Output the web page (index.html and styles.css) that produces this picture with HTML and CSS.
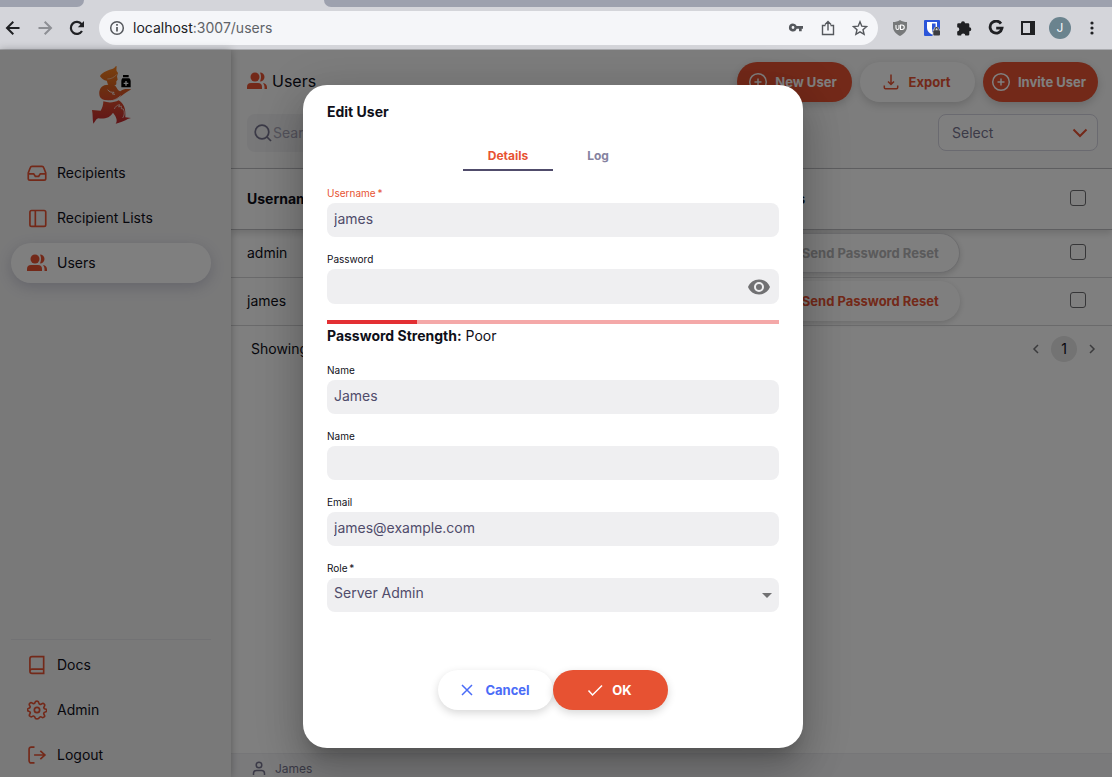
FILE: index.html
```html
<!DOCTYPE html>
<html lang="en">
<head>
<meta charset="utf-8">
<title>Users</title>
<link rel="stylesheet" href="styles.css">
</head>
<body>
<header class="chrome">
  <div class="tabstrip"><span class="tab-left"></span><span class="tab-active"></span><span class="tab-right"></span></div>
  <div class="toolbar">
    <div class="nav-buttons">
      <button class="tool" aria-label="Back"><svg width="16" height="16" viewBox="0 0 16 16" fill="none" stroke="#1f2023" stroke-width="2"><path d="M14.500 8H2.500M8.300 1.800 2 8l6.300 6.200"/></svg></button>
      <button class="tool" aria-label="Forward"><svg width="16" height="16" viewBox="0 0 16 16" fill="none" stroke="#8d8f94" stroke-width="2"><path d="M1.500 8h12M7.700 1.800 14 8l-6.300 6.200"/></svg></button>
      <button class="tool" aria-label="Reload"><svg width="16" height="16" viewBox="0 0 16 16"><path d="M13 11A6 6 0 1 1 12.600 4.200" fill="none" stroke="#1f2023" stroke-width="2.200"/><path d="M15 1v6.200H8.800z" fill="#1f2023"/></svg></button>
    </div>
    <div class="omnibox">
      <svg width="16" height="16" viewBox="0 0 16 16" fill="none" stroke="#55585d" stroke-width="1.500"><circle cx="8" cy="8" r="6.300"/><path d="M8 7v4.500M8 4v1.700" stroke-width="1.700"/></svg>
      <span class="url">localhost<span class="url-path">:3007/users</span></span>
      <div class="omni-actions">
        <svg width="16" height="16" viewBox="0 0 16 16" fill="#55585d"><path fill-rule="evenodd" d="M5 3.500a4 4 0 1 0 3.700 5.300H11v2.400h2.700V8.800H15V6H8.700A4 4 0 0 0 5 3.500zm0 2.600a1.400 1.400 0 1 1 0 2.800 1.400 1.400 0 0 1 0-2.800z"/></svg>
        <svg width="16" height="16" viewBox="0 0 16 16" fill="none" stroke="#55585d" stroke-width="1.400"><path d="M5.500 5.500h-3v9h11v-9h-3M8 10.500V2M5 4.500l3-3 3 3"/></svg>
        <svg width="16" height="16" viewBox="0 0 16 16" fill="none" stroke="#55585d" stroke-width="1.400"><path d="m8 1.800 1.800 4.400 4.800.4-3.600 3.100 1.100 4.700L8 11.900l-4.100 2.500L5 9.700 1.400 6.600l4.800-.4z"/></svg>
      </div>
    </div>
    <div class="extensions">
      <svg width="16" height="16" viewBox="0 0 16 16"><path d="M8 0c2 1.500 4.500 2 7 2v5c0 4-3 7-7 9-4-2-7-5-7-9V2c2.500 0 5-.5 7-2z" fill="#77797a"/><path d="M4 5v3q0 1.500 1.500 1.500T7 8V5M8.500 5v4.500h1.500a2.200 2.200 0 0 0 0-4.500z" fill="none" stroke="#fff" stroke-width="1.100"/></svg>
      <svg width="16" height="16" viewBox="0 0 16 16"><rect width="16" height="16" rx="1" fill="#2b55d9"/><path d="M3 2h10v6c0 3-2 5-5 6.500C5 13 3 11 3 8z" fill="#fff"/><path d="M8 3.500h3.600V8c0 2-1.300 3.500-3.600 4.500z" fill="#2b55d9"/><path d="M8.500 9.500h1.300a2.700 2.700 0 0 1 5.400 0h.8V16H8.500z" fill="#d4d5da"/><rect x="9.300" y="10.300" width="6.700" height="5.200" rx="1" fill="#3c3d40"/><path d="M11 10.500V9.300a1.600 1.600 0 0 1 3.200 0v1.200" fill="none" stroke="#3c3d40" stroke-width="1.200"/></svg>
      <svg width="16" height="16" viewBox="0 0 16 16" fill="#1f2023"><path d="M2.500 3.300H5a2 2 0 1 1 4 0h3a1.300 1.300 0 0 1 1.300 1.300v2.600a2 2 0 1 1 0 4v3.200A1.300 1.300 0 0 1 12 15.500H9.300a2.100 2.100 0 0 0-4.200 0H2.500a1.300 1.300 0 0 1-1.300-1.300v-2.800a2.100 2.100 0 0 0 0-4.200V4.600a1.300 1.300 0 0 1 1.300-1.300z"/></svg>
      <svg width="16" height="16" viewBox="0 0 16 16" fill="none" stroke="#1f2023" stroke-width="2.800"><path d="M13 3.600A6 6 0 1 0 14 8.200H8.200"/></svg>
      <svg width="16" height="16" viewBox="0 0 16 16" fill="#1f2023"><path fill-rule="evenodd" d="M1 1h14v14H1zm2 2v10h7V3z"/></svg>
      <span class="avatar">J</span>
      <svg width="16" height="16" viewBox="0 0 16 16" fill="#1f2023"><circle cx="8" cy="3" r="1.600"/><circle cx="8" cy="8" r="1.600"/><circle cx="8" cy="13" r="1.600"/></svg>
    </div>
  </div>
</header>

<div class="app">
  <nav class="sidebar" aria-label="Main">
    <svg class="logo" width="40" height="60" viewBox="33 33 120 180" role="img" aria-label="Logo">
      <defs><linearGradient id="flame" x1="0" y1="0" x2="0" y2="1"><stop offset="0" stop-color="#f58220"/><stop offset="1" stop-color="#d9641f"/></linearGradient>
      <linearGradient id="mid" x1="0" y1="0" x2="0" y2="1"><stop offset="0" stop-color="#d9641f"/><stop offset="1" stop-color="#d94a2b"/></linearGradient>
      <linearGradient id="ember" x1="0" y1="0" x2="0" y2="1"><stop offset="0" stop-color="#d94a2b"/><stop offset="1" stop-color="#bf2a30"/></linearGradient></defs>
      <path fill="url(#flame)" d="M60 64C64 54 80 47 94 43c8-3 12-6 15-12 2 7-1 12 1 17l4 6-3 10 2 10-4 5v9c-5 5-16 6-24 2-3-5-3-10-5-13-9-1-14-5-20-13z"/>
      <path fill="none" stroke="#f4f4f5" stroke-width="1.500" d="M82 72c12 0 20-5 28-13"/>
      <path fill="url(#mid)" d="M78 90c-18 2-24 22-18 36 6 10 28 14 46 8 12-4 26-20 48-31-12-2-25-2-33 6-8-1-10-12-17-18-8-4-17-3-26-1z"/>
      <path fill="none" stroke="#f4f4f5" stroke-width="2.500" d="M83 104c5 8 12 8 19 8l-5 5 8 1M70 136c20 5 38 0 52-14"/>
      <path fill="url(#ember)" d="M70 139c16 5 32 4 46-3 15 9 22 25 20 51l17 2c-14 3-24 13-46 17 7-10 1-22-8-33-8 14-24 20-44 17-8 2-9 10-15 16-3-14-1-26-4-41l26 2c5-7 8-18 8-28z"/>
      <path fill="none" stroke="#f4f4f5" stroke-width="2" d="M103 162c3-7 8-12 16-13l-3 7 8-3v8l6 1c5 10 3 20-2 27"/>
      <path fill="#000" d="M129 60h17v7h-17zM127 70h21q4 3 4 8v19h-28V78q0-5 3-8z"/>
      <path stroke="#f4f4f5" stroke-width="4" d="M131 85h14M138 78v14"/>
    </svg>
    <div class="menu">
      <a class="item" href="#recipients"><svg class="ic" viewBox="0 0 24 24"><path d="M22 13h-6l-2 3h-4l-2-3H2M6 4h12q1.500 0 2 1.500L22.500 12v6.500a2 2 0 0 1-2 2h-17a2 2 0 0 1-2-2V12L4 5.500Q4.500 4 6 4z"/></svg>Recipients</a>
      <a class="item" href="#lists"><svg class="ic" viewBox="0 0 24 24"><rect x="3.500" y="3" width="19" height="19" rx="2"/><path d="M10 3v19"/></svg>Recipient Lists</a>
      <a class="item active" href="#users" aria-current="page"><svg class="people" viewBox="0 0 20 20"><circle cx="8" cy="6" r="4.500"/><path d="M0 18v-2q0-4 4-4h7q4 0 4 4v2zM13 1.500a4.500 4.500 0 0 1 0 9q2-4.500 0-9zM16 12q4 .5 4 4.500V18h-2.500v-2q0-2-1.500-4z"/></svg>Users</a>
    </div>
    <div class="menu menu-bottom">
      <a class="item" href="#docs"><svg class="ic" viewBox="0 0 24 24"><path d="M20 17V2H6a2.500 2.500 0 0 0-2.500 2.500v15A2.500 2.500 0 0 0 6 22h14v-5H6a2.500 2.500 0 0 0-2.500 2.500"/></svg>Docs</a>
      <a class="item" href="#admin"><svg class="ic" viewBox="0 0 24 24"><circle cx="12" cy="12" r="3.200"/><path stroke-linejoin="round" d="M12 1.300q2 0 2.200 2.200.2 1.400 1.600 1.700 1 .2 1.800-.5 1.700-1.200 3 .1t.1 3q-.9 1-.3 2 .4.900 1.400 1 1.900.2 1.900 1.700t-1.900 1.900q-1.200.2-1.600 1.200-.4 1 .4 2 1.200 1.600-.1 2.800t-2.900.2q-1-.8-2-.3-.9.4-1.100 1.400Q14.200 22.700 12 22.700t-2.500-1.900q-.2-1-1.100-1.400-1-.5-2 .3-1.600 1-2.900-.2t-.1-2.800q.8-1 .4-2-.4-1-1.600-1.200Q.5 13.100.5 11.800t1.700-1.900q1-.1 1.400-1 .6-1-.3-2-1.200-1.700.1-3t3-.1q.8.700 1.800.5 1.400-.3 1.600-1.700Q10 1.300 12 1.300z"/></svg>Admin</a>
      <a class="item" href="#logout"><svg class="ic" viewBox="0 0 24 24"><path d="M9 2.500H5A2.500 2.500 0 0 0 2.500 5v14A2.500 2.500 0 0 0 5 21.500h4M8.500 12H21M16 7l5.500 5-5.500 5"/></svg>Logout</a>
    </div>
  </nav>

  <main class="main">
    <div class="page-head">
      <div class="head-row">
        <h1 class="page-title"><svg class="people" viewBox="0 0 20 20"><circle cx="8" cy="6" r="4.500"/><path d="M0 18v-2q0-4 4-4h7q4 0 4 4v2zM13 1.500a4.500 4.500 0 0 1 0 9q2-4.500 0-9zM16 12q4 .5 4 4.500V18h-2.500v-2q0-2-1.500-4z"/></svg>Users</h1>
        <div class="actions">
          <button class="btn primary"><svg class="bic" viewBox="0 0 20 20"><circle cx="10" cy="10" r="8.300"/><path d="M6.500 10h7M10 6.500v7"/></svg>New User</button>
          <button class="btn export"><svg class="bic" viewBox="0 0 20 20"><path d="M10 2.500v10M7 9.500l3 3 3-3M3.300 13.500v2a1.200 1.200 0 0 0 1.200 1.200h11a1.200 1.200 0 0 0 1.200-1.200v-2"/></svg>Export</button>
          <button class="btn primary"><svg class="bic" viewBox="0 0 20 20"><circle cx="10" cy="10" r="8.300"/><path d="M6.500 10h7M10 6.500v7"/></svg>Invite User</button>
        </div>
      </div>
      <div class="head-row">
        <label class="search"><svg width="18" height="18" viewBox="0 0 18 18" fill="none" stroke="#77748f" stroke-width="1.700"><circle cx="8" cy="8" r="6.800"/><path d="m13 13 4 4"/></svg><input type="search" placeholder="Search" aria-label="Search"></label>
        <div class="select-wrap"><select class="select" aria-label="Action"><option>Select</option></select><svg class="chev" width="16" height="10" viewBox="0 0 16 10"><path d="m1.500 1.500 6.500 6.500 6.500-6.500" fill="none" stroke="#e75232" stroke-width="2"/></svg></div>
      </div>
    </div>

    <table class="users">
      <colgroup><col class="c-name"><col><col class="c-check"></colgroup>
      <thead><tr><th>Username</th><th class="act">Actions</th><th class="chk"><input type="checkbox" aria-label="Select all"></th></tr></thead>
      <tbody>
        <tr><td>admin</td><td class="act"><button class="reset" disabled>Send Password Reset</button></td><td class="chk"><input type="checkbox" aria-label="Select admin"></td></tr>
        <tr><td>james</td><td class="act"><button class="reset">Send Password Reset</button></td><td class="chk"><input type="checkbox" aria-label="Select james"></td></tr>
      </tbody>
    </table>
    <div class="pager">
      <span>Showing</span>
      <div class="pages">
        <button class="page-arrow" aria-label="Previous"><svg width="8" height="10" viewBox="0 0 8 10"><path d="M6 1 2 5l4 4"/></svg></button>
        <button class="page-current">1</button>
        <button class="page-arrow" aria-label="Next"><svg width="8" height="10" viewBox="0 0 8 10"><path d="m2 1 4 4-4 4"/></svg></button>
      </div>
    </div>
    <footer class="foot"><svg width="16" height="16" viewBox="0 0 16 16" fill="none" stroke="#77748f" stroke-width="1.500"><circle cx="8" cy="4" r="2.800"/><path d="M2.500 14v-1.500q0-3 3-3h5q3 0 3 3V14"/></svg>James</footer>
  </main>

  <div class="overlay">
    <form class="modal" role="dialog" aria-labelledby="dlg-title">
      <h2 class="dlg-title" id="dlg-title">Edit User</h2>
      <div class="tabs" role="tablist">
        <button type="button" class="tab on" role="tab" aria-selected="true">Details</button>
        <button type="button" class="tab" role="tab" aria-selected="false">Log</button>
      </div>
      <div class="field focus"><label for="f-user">Username&thinsp;*</label><input id="f-user" type="text" value="james"></div>
      <div class="field"><label for="f-pass">Password</label>
        <div class="control"><input class="tall" id="f-pass" type="password"><button type="button" class="eye" aria-label="Show password"><svg width="22" height="16" viewBox="0 0 22 16"><path fill="#717173" fill-rule="evenodd" d="M11 .5C6 .5 1.700 3.500 0 8c1.700 4.500 6 7.500 11 7.500S20.300 12.500 22 8C20.300 3.500 16 .5 11 .5zM11 3a5 5 0 1 1 0 10 5 5 0 0 1 0-10zm0 2a3 3 0 1 0 0 6 3 3 0 0 0 0-6z"/></svg></button></div></div>
      <div class="strength">
        <div class="meter"><span class="meter-fill" style="width:20%"></span></div>
        <p class="strength-text"><strong>Password Strength:</strong> Poor</p>
      </div>
      <div class="field"><label for="f-name">Name</label><input id="f-name" type="text" value="James"></div>
      <div class="field"><label for="f-name2">Name</label><input id="f-name2" type="text"></div>
      <div class="field"><label for="f-mail">Email</label><input id="f-mail" type="email" value="james@example.com"></div>
      <div class="field"><label for="f-role">Role&thinsp;*</label>
        <div class="control"><select id="f-role"><option>Server Admin</option></select><svg class="caret" width="10" height="5" viewBox="0 0 10 5"><path d="M0 0h10L5 5z" fill="#717173"/></svg></div></div>
      <div class="dlg-actions">
        <button type="button" class="btn cancel"><svg class="bic" viewBox="0 0 20 20"><path d="m5 5 10 10M15 5 5 15"/></svg>Cancel</button>
        <button type="button" class="btn primary ok"><svg class="bic" viewBox="0 0 20 20"><path d="m3.500 10.500 4 4.500L17 5.500"/></svg>OK</button>
      </div>
    </form>
  </div>
</div>
</body>
</html>
```
FILE: styles.css
```css
* { box-sizing: border-box; }
body {
  margin: 0;
  height: 100vh;
  display: flex;
  flex-direction: column;
  overflow: hidden;
  font: 14px/20px Inter, sans-serif;
  color: #0f0f19;
}
button, input, select { font: inherit; color: inherit; margin: 0; }
button { border: 0; padding: 0; background: none; cursor: pointer; }
svg { flex: none; }

/* Browser frame */
.chrome { background: #d4d5da; border-bottom: 1px solid #aaabaf; }
.tabstrip { display: flex; height: 7px; }
.tab-left, .tab-right { background: #9da1ae; }
.tab-left { width: 84px; border-bottom-right-radius: 8px; }
.tab-active { width: 240px; }
.tab-right { flex: 1; border-bottom-left-radius: 8px; }
.toolbar { display: flex; align-items: center; height: 42px; padding-right: 12px; }
.nav-buttons { display: flex; gap: 16px; width: 99px; padding-left: 5px; }
.tool { display: flex; }
.omnibox {
  flex: 1;
  display: flex;
  align-items: center;
  gap: 8px;
  height: 34px;
  padding: 0 10px;
  border-radius: 17px;
  background: #f5f6f9;
}
.url { font-size: 14px; color: #202124; }
.url-path { color: #5f6368; }
.omni-actions { display: flex; gap: 16px; margin-left: auto; }
.extensions { display: flex; align-items: center; gap: 16px; padding-left: 14px; }
.avatar {
  width: 22px;
  height: 22px;
  margin: 0 -3px;
  border-radius: 50%;
  background: #6a838e;
  color: #f5f6f9;
  font-size: 12px;
  line-height: 22px;
  text-align: center;
}

/* Shell */
.app { position: relative; flex: 1; min-height: 0; display: flex; }
.sidebar {
  z-index: 1;
  width: 231px;
  display: flex;
  flex-direction: column;
  padding: 16px 20px 2px 11px;
  background: #f2f2f3;
  box-shadow: 0 0 8px rgba(0, 0, 0, .3);
}
.logo { align-self: center; margin-bottom: 27px; }
.menu { display: flex; flex-direction: column; gap: 5px; }
.menu-bottom { margin-top: auto; padding-top: 5px; border-top: 1px solid #e4e4e8; }
.item {
  display: flex;
  align-items: center;
  gap: 10px;
  height: 40px;
  padding-left: 16px;
  border-radius: 20px;
  color: inherit;
  text-decoration: none;
}
.item.active { background: #fff; box-shadow: 0 4px 14px rgba(60, 60, 110, .22); }
.ic { width: 20px; height: 20px; fill: none; stroke: #e75232; stroke-width: 2; }
.people { width: 20px; height: 20px; fill: #e75232; }

.main { flex: 1; min-width: 0; display: flex; flex-direction: column; background: #fff; }
.page-head {
  display: flex;
  flex-direction: column;
  gap: 12px;
  padding: 12px 14px 16px 16px;
  background: #fafafa;
}
.head-row { display: flex; justify-content: space-between; }
.page-title { display: flex; align-items: center; gap: 5px; margin: 0; padding-bottom: 2px; font-size: 16px; font-weight: 400; }
.actions { display: flex; gap: 8px; }
.btn {
  display: flex;
  align-items: center;
  justify-content: center;
  gap: 7px;
  width: 115px;
  height: 40px;
  padding-right: 4px;
  border-radius: 20px;
  background: #fff;
  font-size: 13px;
  font-weight: 700;
  white-space: nowrap;
  box-shadow: 0 3px 8px rgba(0, 0, 0, .16);
}
.bic { width: 20px; height: 20px; fill: none; stroke: currentColor; stroke-width: 1.500; }
.primary { background: #e75232; color: #fff; }
.export { color: #e75232; }
.export, .cancel { gap: 8px; }
.cancel { color: #4a6cf7; }
.search {
  display: flex;
  align-items: center;
  gap: 1px;
  width: 300px;
  height: 38px;
  padding-left: 7px;
  border-radius: 8px;
  background: #f0f0f2;
}
.search input { flex: 1; min-width: 0; border: 0; padding: 0; background: none; }
.search input::placeholder { color: #a9a7b8; opacity: 1; }
.select-wrap { position: relative; width: 160px; }
.select {
  width: 100%;
  height: 37px;
  padding: 0 13px;
  appearance: none;
  border: 1px solid #d5d4e0;
  border-radius: 8px;
  background: #fff;
  color: #77748f;
}
.chev { position: absolute; right: 10px; top: 14px; pointer-events: none; }

.users { width: 100%; table-layout: fixed; border-collapse: collapse; }
.c-name { width: 59%; }
.c-check { width: 42px; }
.users th, .users td { padding: 0 0 0 16px; text-align: left; }
.users th { height: 61px; border: solid #bdbdc0; border-width: 1px 0; font-weight: 700; }
.users thead { box-shadow: 0 4px 6px rgba(0, 0, 0, .12); }
.users td { height: 48px; padding-bottom: 2px; border-bottom: 1px solid #d4d4d6; }
.users td.act { padding-left: 1px; }
.users th.act { padding-left: 2px; }
.users .chk { padding-left: 0; }
.users td.chk { padding-bottom: 4px; }
.users th.chk { padding-bottom: 2px; }
.chk input {
  display: block;
  width: 16px;
  height: 16px;
  appearance: none;
  border: 1px solid #6c6c70;
  border-radius: 3px;
}
.reset {
  display: block;
  width: 208px;
  height: 40px;
  padding-right: 21px;
  border-radius: 20px;
  background: #fff;
  color: #e75232;
  font-size: 13px;
  font-weight: 700;
  text-align: right;
  box-shadow: 0 2px 6px rgba(0, 0, 0, .16);
}
.reset:disabled { border: 1px solid #d9d9dc; padding-right: 20px; color: #b4b4b6; }
.pager { display: flex; justify-content: space-between; align-items: center; padding: 10px 14px 0 20px; }
.pages { display: flex; align-items: center; gap: 9px; }
.page-arrow { display: flex; padding: 0 2px; }
.page-arrow path { fill: none; stroke: #77777a; stroke-width: 1.500; }
.page-current { width: 26px; height: 26px; border-radius: 50%; background: #e6e6e6; }
.foot {
  display: flex;
  align-items: center;
  gap: 8px;
  height: 24px;
  margin-top: auto;
  padding: 6px 0 0 20px;
  background: #f4f4f7;
  border-top: 1px solid #ececf0;
  color: #77748f;
  font-size: 12px;
  line-height: 16px;
}

/* Dialog */
.overlay {
  position: absolute;
  inset: 0;
  z-index: 2;
  display: flex;
  justify-content: center;
  align-items: center;
  padding: 6px 6px 0 0;
  background: rgba(0, 0, 0, .5);
}
.modal {
  width: 500px;
  padding: 17px 24px 38px;
  border-radius: 24px;
  background: #fff;
  box-shadow: 0 11px 15px -7px rgba(0, 0, 0, .2), 0 24px 38px 3px rgba(0, 0, 0, .14), 0 9px 46px 8px rgba(0, 0, 0, .12);
}
.dlg-title { margin: 0 0 19px; font-size: 14px; font-weight: 700; }
.tabs { display: flex; justify-content: center; margin-bottom: 15px; }
.tab {
  width: 90px;
  height: 30px;
  padding-top: 2px;
  border-bottom: 2px solid transparent;
  color: #8582a0;
  font-size: 12px;
  font-weight: 700;
}
.tab.on { border-color: #504c6b; color: #e75232; }
.field { display: flex; flex-direction: column; gap: 3px; margin-bottom: 15px; }
.field label { font-size: 10px; line-height: 14px; }
.focus label { color: #e75232; }
.field input, .field select {
  width: 100%;
  height: 34px;
  padding: 0 7px 4px;
  appearance: none;
  border: 0;
  border-radius: 8px;
  background: #efeff1;
  color: #504c6b;
}
.field .tall { height: 35px; }
.control { position: relative; display: flex; }
.eye { position: absolute; right: 9px; top: 10px; display: flex; }
.caret { position: absolute; right: 7px; top: 15px; pointer-events: none; }
.strength { margin: 16px 0 15px; }
.meter { height: 4px; background: #f4a8a8; }
.meter-fill { display: block; height: 100%; background: #e32f33; }
.strength-text { margin: 0; line-height: 24px; }
.dlg-actions { display: flex; justify-content: center; padding-top: 43px; }
```
